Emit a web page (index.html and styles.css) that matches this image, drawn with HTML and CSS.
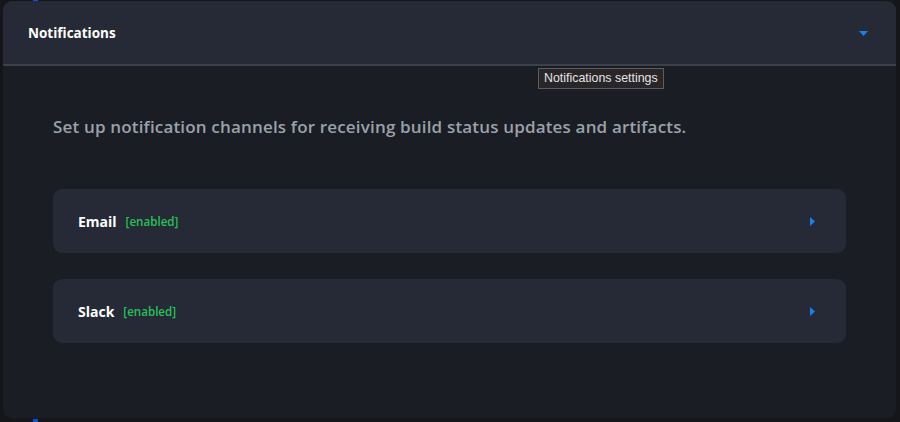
FILE: index.html
```html
<!DOCTYPE html>
<html>
<head>
<meta charset="utf-8">
<link rel="stylesheet" href="styles.css">
</head>
<body>
<div class="marker marker-top"></div>
<section class="panel">
  <header class="panel-header">
    <h2 class="panel-title">Notifications</h2>
    <svg class="caret-down" width="9" height="5" viewBox="0 0 9 5"><path d="M0 0H9L4.5 5Z" fill="#1a7ff0"/></svg>
    <div class="tooltip">Notifications settings</div>
  </header>
  <div class="panel-body">
    <p class="intro">Set up notification channels for receiving build status updates and artifacts.</p>
    <div class="channel">
      <span class="channel-name">Email</span>
      <span class="status">[enabled]</span>
      <svg class="caret-right" width="5" height="9" viewBox="0 0 5 9"><path d="M0 0L5 4.5L0 9Z" fill="#1a7ff0"/></svg>
    </div>
    <div class="channel">
      <span class="channel-name">Slack</span>
      <span class="status">[enabled]</span>
      <svg class="caret-right" width="5" height="9" viewBox="0 0 5 9"><path d="M0 0L5 4.5L0 9Z" fill="#1a7ff0"/></svg>
    </div>
  </div>
</section>
<div class="marker marker-bottom"></div>
</body>
</html>
```
FILE: styles.css
```css
html, body {
  margin: 0;
  padding: 0;
  background: #141619;
  width: 900px;
  height: 422px;
  overflow: hidden;
  font-family: "Open Sans", "Lato", sans-serif;
}
body {
  position: relative;
  padding: 1px 4px 4px 3px;
  box-sizing: border-box;
}
.marker {
  position: absolute;
  left: 33px;
  width: 5px;
  background: #0a4cf0;
}
.marker-top { top: 0; height: 2px; }
.marker-bottom { bottom: 0; height: 3px; }
.panel {
  height: 417px;
  background: #1a1d24;
  border-radius: 9px;
  display: flex;
  flex-direction: column;
}
.panel-header {
  position: relative;
  height: 63px;
  flex: none;
  background: #252a36;
  border-radius: 9px 9px 0 0;
  border-bottom: 2px solid #3b404b;
  display: flex;
  align-items: center;
  justify-content: space-between;
  padding: 0 28px 0 25px;
}
.panel-title {
  margin: 0;
  color: #ffffff;
  font-size: 13.5px;
  font-weight: 700;
}
.caret-down { margin-top: 1px; }
.tooltip {
  position: absolute;
  left: 535px;
  top: 67px;
  padding: 2px 5px 3px;
  background: #29262a;
  border: 1px solid #5c5b5e;
  color: #e3e3e3;
  font-family: "Liberation Sans", Arial, sans-serif;
  font-size: 12.4px;
  line-height: 14px;
  z-index: 2;
}
.panel-body {
  padding: 50px 50px 0 50px;
  display: flex;
  flex-direction: column;
  gap: 26px;
}
.intro {
  margin: 0 0 25px;
  color: #9ba1ab;
  font-size: 17px;
  font-weight: 600;
  letter-spacing: 0.17px;
  line-height: 22px;
}
.channel {
  height: 64px;
  background: #252a36;
  border-radius: 9px;
  display: flex;
  align-items: center;
  padding: 0 31px 0 25px;
}
.channel-name {
  color: #ffffff;
  font-size: 14px;
  font-weight: 700;
}
.status {
  margin-left: 9px;
  color: #25c257;
  font-size: 11.6px;
  font-weight: 600;
  flex: 1;
}
```
